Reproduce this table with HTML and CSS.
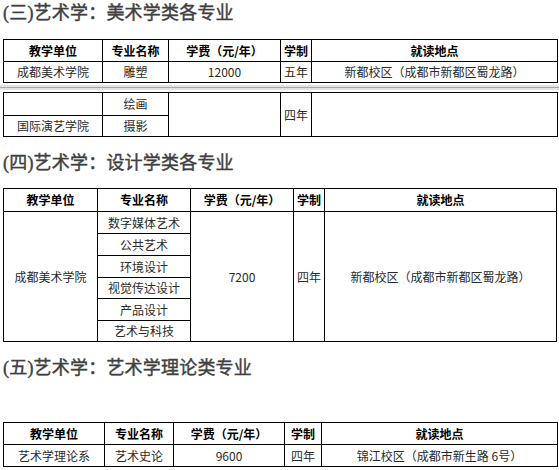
FILE: index.html
```html
<!DOCTYPE html>
<html lang="zh-CN">
<head>
<meta charset="utf-8">
<title>艺术学专业</title>
<link rel="stylesheet" href="styles.css">
</head>
<body>
<h2 class="sec sec-first">(三)艺术学：美术学类各专业</h2>
<table class="grid g1">
  <colgroup><col class="c1"><col class="c2"><col class="c3"><col class="c4"><col class="c5"></colgroup>
  <tr class="r22"><th>教学单位</th><th>专业名称</th><th>学费（元/年）</th><th>学制</th><th>就读地点</th></tr>
  <tr class="r21"><td>成都美术学院</td><td>雕塑</td><td>12000</td><td>五年</td><td>新都校区（成都市新都区蜀龙路）</td></tr>
</table>
<div class="sep"></div>
<table class="grid g1 g2">
  <colgroup><col class="c1"><col class="c2"><col class="c3"><col class="c4"><col class="c5"></colgroup>
  <tr class="r23"><td></td><td>绘画</td><td rowspan="2"></td><td rowspan="2">四年</td><td rowspan="2"></td></tr>
  <tr class="r21"><td>国际演艺学院</td><td>摄影</td></tr>
</table>

<h2 class="sec sec-2">(四)艺术学：设计学类各专业</h2>
<table class="grid g3">
  <colgroup><col class="c1"><col class="c2"><col class="c3"><col class="c4"><col class="c5"></colgroup>
  <tr class="r23"><th>教学单位</th><th>专业名称</th><th>学费（元/年）</th><th>学制</th><th>就读地点</th></tr>
  <tr class="r22"><td rowspan="6">成都美术学院</td><td>数字媒体艺术</td><td rowspan="6">7200</td><td rowspan="6">四年</td><td rowspan="6">新都校区（成都市新都区蜀龙路）</td></tr>
  <tr class="r22"><td>公共艺术</td></tr>
  <tr class="r22"><td>环境设计</td></tr>
  <tr class="r21"><td>视觉传达设计</td></tr>
  <tr class="r22"><td>产品设计</td></tr>
  <tr class="r21"><td>艺术与科技</td></tr>
</table>

<h2 class="sec sec-3">(五)艺术学：艺术学理论类专业</h2>
<table class="grid g4">
  <colgroup><col class="c1"><col class="c2"><col class="c3"><col class="c4"><col class="c5"></colgroup>
  <tr class="r22"><th>教学单位</th><th>专业名称</th><th>学费（元/年）</th><th>学制</th><th>就读地点</th></tr>
  <tr class="r22"><td>艺术学理论系</td><td>艺术史论</td><td>9600</td><td>四年</td><td>锦江校区（成都市新生路 6号）</td></tr>
</table>
</body>
</html>
```

FILE: styles.css
```css
html, body {
  margin: 0;
  padding: 0;
  background: #ffffff;
}

body {
  width: 559px;
  font-family: "Noto Sans CJK SC", sans-serif;
}

.sec {
  margin: 0;
  padding-left: 3px;
  font-family: "Liberation Serif", "Noto Sans CJK SC", serif;
  font-size: 18px;
  font-weight: normal;
  line-height: 26px;
  height: 26px;
  color: #404040;
  -webkit-text-stroke: 0.4px #404040;
  letter-spacing: 0.2px;
}

.sec-first { margin-bottom: 13px; }
.sec-2 { margin-top: 13px; margin-bottom: 12px; }
.sec-3 { margin-top: 13px; margin-bottom: 41px; }

.grid {
  border-collapse: collapse;
  table-layout: fixed;
  margin-left: 3px;
  font-size: 12px;
  color: #2a2a2a;
}

.grid th,
.grid td {
  border: 1px solid #000;
  padding: 0;
  text-align: center;
  vertical-align: middle;
  line-height: 16px;
  white-space: nowrap;
  overflow: hidden;
}

.grid th {
  font-weight: bold;
  color: #000;
}

.r21 { height: 21px; }
.r22 { height: 22px; }
.r23 { height: 23px; }

.g1 { width: 555px; }
.g1 .c1 { width: 99px; }
.g1 .c2 { width: 66px; }
.g1 .c3 { width: 112px; }
.g1 .c4 { width: 31px; }
.g1 .c5 { width: 246px; }

.g3 { width: 554px; }
.g3 .c1 { width: 94px; }
.g3 .c2 { width: 93px; }
.g3 .c3 { width: 103px; }
.g3 .c4 { width: 31px; }
.g3 .c5 { width: 232px; }

.g4 { width: 555px; }
.g4 .c1 { width: 101px; }
.g4 .c2 { width: 69px; }
.g4 .c3 { width: 111px; }
.g4 .c4 { width: 37px; }
.g4 .c5 { width: 236px; }

.sep {
  margin: 2px 0;
  height: 1px;
  background: #a8a8a8;
  border-top: 2px solid #e2e2e2;
  border-bottom: 2px solid #e2e2e2;
}
```
